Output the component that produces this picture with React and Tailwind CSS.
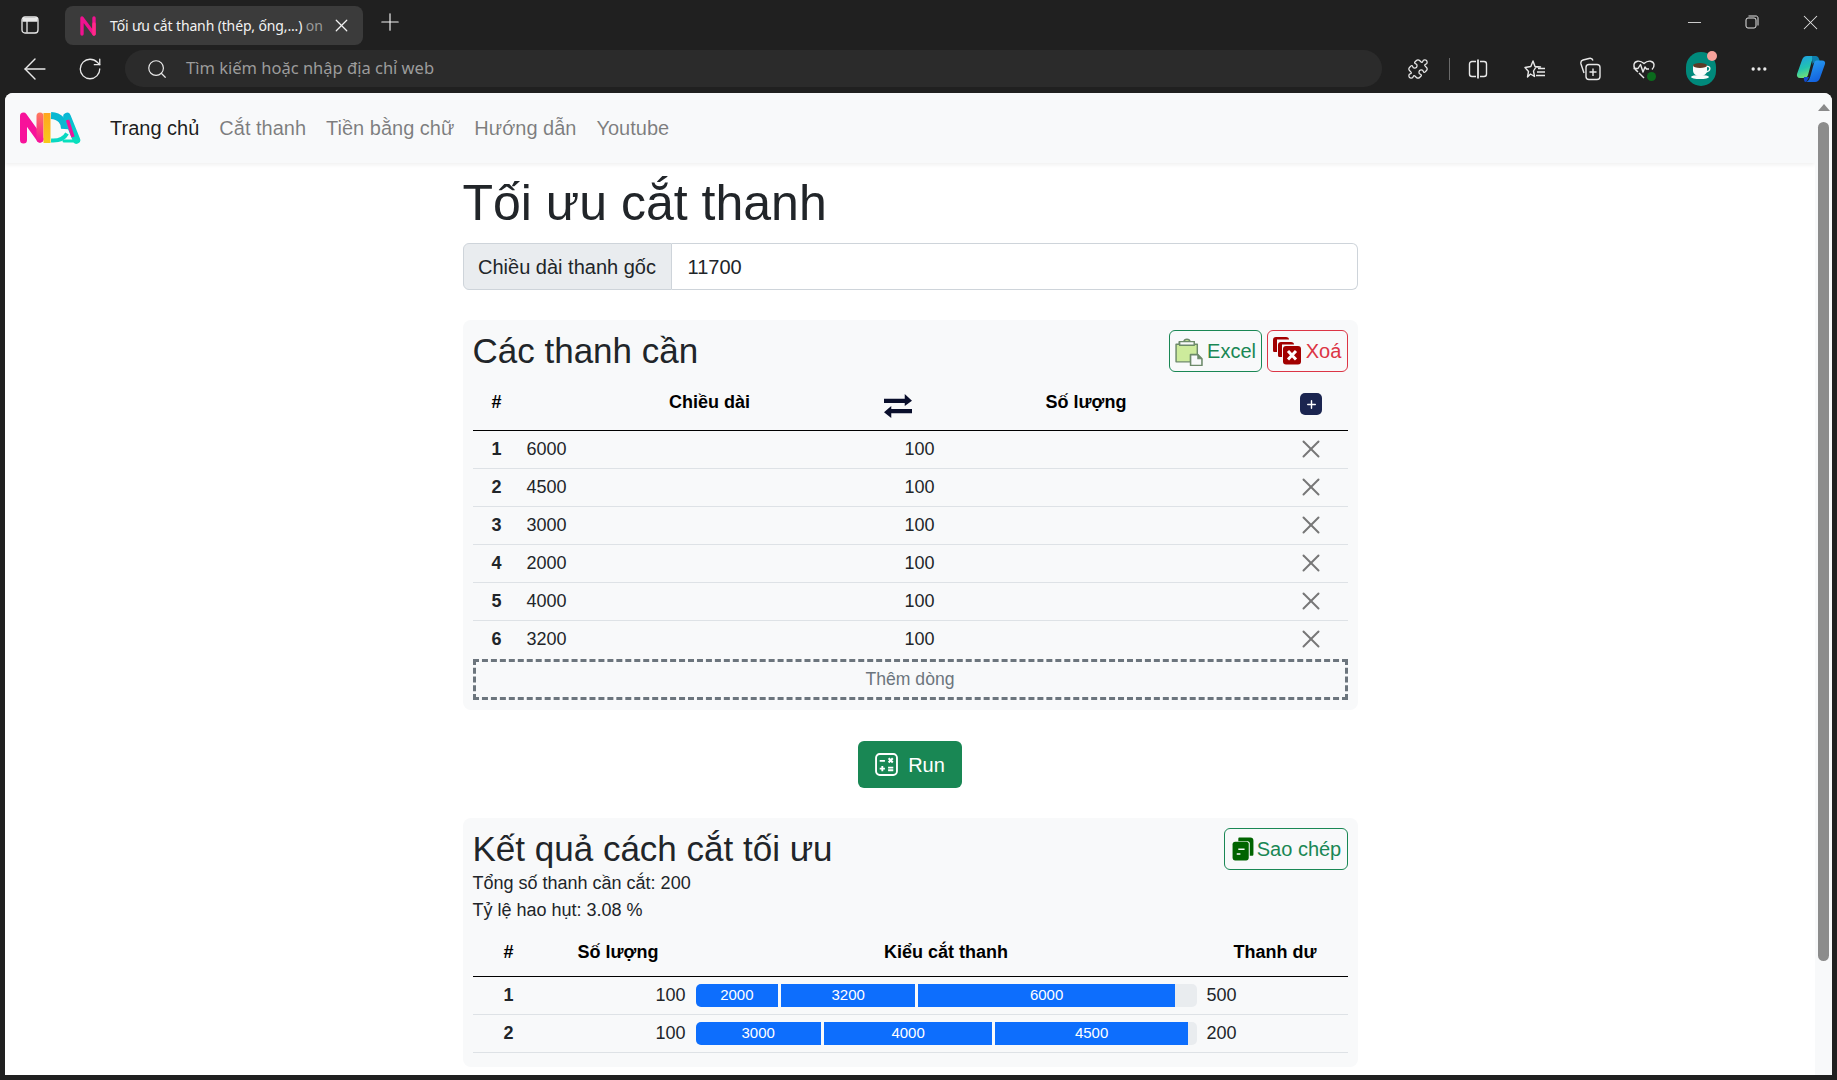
import { Plus, X, ArrowLeft, RotateCw, Search, Puzzle, Minus, Ellipsis } from "lucide-react";

const needed = [
  [1, 6000, 100],
  [2, 4500, 100],
  [3, 3000, 100],
  [4, 2000, 100],
  [5, 4000, 100],
  [6, 3200, 100],
];

const results = [
  { id: 1, qty: 100, cuts: [2000, 3200, 6000], left: 500 },
  { id: 2, qty: 100, cuts: [3000, 4000, 4500], left: 200 },
];

const STOCK = 11700;

const NdaLogo = () => (
  <svg viewBox="0 0 62 32" className="w-[62px] h-[32px]" fill="none" strokeLinecap="round" strokeLinejoin="round">
    <defs>
      <linearGradient id="nRight" gradientUnits="userSpaceOnUse" x1="0" y1="30" x2="0" y2="1">
        <stop offset="0" stopColor="#f5129a" />
        <stop offset="1" stopColor="#ff7a5c" />
      </linearGradient>
      <linearGradient id="dBar" gradientUnits="userSpaceOnUse" x1="0" y1="1" x2="0" y2="31">
        <stop offset="0" stopColor="#ffa51f" />
        <stop offset="1" stopColor="#f7c91b" />
      </linearGradient>
      <linearGradient id="aLeg" gradientUnits="userSpaceOnUse" x1="0" y1="1" x2="0" y2="31">
        <stop offset="0" stopColor="#09b5d6" />
        <stop offset="1" stopColor="#08e0bd" />
      </linearGradient>
    </defs>
    <path d="M3.500 28V4L20 27" stroke="#f7129a" strokeWidth="7" />
    <path d="M20 27V4" stroke="url(#nRight)" strokeWidth="7" />
    <path d="M31 3.500C40 4 45 10 44.500 17" stroke="#09b8d2" strokeWidth="7" strokeLinecap="butt" />
    <path d="M31 28.500C38 29 44 27 47 21.500" stroke="#08d8c2" strokeWidth="4" strokeLinecap="butt" />
    <path d="M27 1V31" stroke="url(#dBar)" strokeWidth="7" strokeLinecap="butt" />
    <path d="M47 4.500L56.500 28" stroke="url(#aLeg)" strokeWidth="7.500" />
    <path d="M47.500 8L53 25" stroke="#f0149c" strokeWidth="3.400" strokeLinecap="butt" />
    <path d="M44 29H57" stroke="#08e0bd" strokeWidth="3" />
  </svg>
);

const TabFavicon = () => (
  <svg viewBox="0 0 16 20" className="w-4 h-5" fill="none" strokeWidth="3.4" strokeLinecap="round">
    <path d="M2 18V2L14 18V2" stroke="#f0128f" strokeLinejoin="round" />
    <path d="M14 18V8" stroke="#ff2b88" />
  </svg>
);

const SidebarIcon = () => (
  <svg viewBox="0 0 18 18" className="w-[18px] h-[18px]" fill="none" stroke="#e8e8e8" strokeWidth="1.3">
    <rect x="1" y="1" width="16" height="16" rx="3" />
    <path d="M1.500 5H16.500M6 5V16.500" />
    <rect x="1.600" y="1.600" width="14.800" height="3.400" fill="#e8e8e8" stroke="none" />
  </svg>
);

const RestoreIcon = () => (
  <svg viewBox="0 0 14 14" className="w-[14px] h-[14px]" fill="none" stroke="#e4e4e4" strokeWidth="1">
    <rect x="1" y="3" width="10" height="10" rx="2" />
    <path d="M3.500 1H11C12.200 1 13 1.800 13 3V10.500" />
  </svg>
);

const SplitIcon = () => (
  <svg viewBox="0 0 20 20" className="w-5 h-5" fill="none" stroke="#e8e8e8" strokeWidth="1.4">
    <path d="M8 2.500H4A2.500 2.500 0 0 0 1.500 5V15A2.500 2.500 0 0 0 4 17.500H8" />
    <path d="M12 2.500H16A2.500 2.500 0 0 1 18.500 5V15A2.500 2.500 0 0 1 16 17.500H12" />
    <path d="M10 0.500V19.500" strokeWidth="1.8" />
  </svg>
);

const FavoritesIcon = () => (
  <svg viewBox="0 0 22 20" className="w-[22px] h-5" fill="none" stroke="#e8e8e8" strokeWidth="1.4" strokeLinejoin="round">
    <path d="M9 2L11 7.500L16.500 8H12L9.500 12L10.500 17.500L6.500 15L3.500 18L4.500 12.500L1 8.500L6.800 7.500Z" />
    <path d="M14 9.500H21M13 13H21M12 16.500H21" />
  </svg>
);

const CollectionsIcon = () => (
  <svg viewBox="0 0 22 24" className="w-[22px] h-6" fill="none" stroke="#e8e8e8" strokeWidth="1.4">
    <path d="M5 16L2 7C1.500 5 2.500 3.500 4 3L10 1.500C12 1 13.500 2 14 3.500" />
    <rect x="7" y="7.500" width="14" height="15" rx="3" />
    <path d="M14 11.500V19M10.500 15H17.500" />
  </svg>
);

const HeartIcon = () => (
  <div className="relative w-6 h-6">
    <svg viewBox="0 0 24 24" className="w-6 h-6" fill="none" stroke="#e8e8e8" strokeWidth="1.4" strokeLinejoin="round">
      <path d="M6 15C3 12.500 1.500 10.500 2 7.500C2.500 4 7.500 2.500 12 6.500C16.500 2.500 21.500 4 22 7.500C22.300 9.500 21.500 11 20 12.500" />
      <path d="M1.500 11.500H6L8.500 7.500L11 15L13 10L14.500 12H17" />
      <path d="M7 16L12 21" />
    </svg>
    <div className="absolute right-0 bottom-0 w-[9px] h-[9px] rounded-full bg-[#0b6b1d]" />
  </div>
);

const Avatar = () => (
  <div className="relative w-[30px] h-[34px] rounded-full bg-[#00897b] flex items-center justify-center">
    <svg viewBox="0 0 26 26" className="w-[26px] h-[26px]">
      <path d="M5 9H19V14C19 18 16 20 12 20C8 20 5 18 5 14Z" fill="#fafafa" />
      <ellipse cx="12" cy="9.500" rx="7" ry="2.500" fill="#5b3a26" />
      <path d="M19 10.500C23 10 23 15 18 16" stroke="#fafafa" strokeWidth="1.300" fill="none" />
      <ellipse cx="12" cy="21" rx="9" ry="2" fill="#fafafa" />
    </svg>
    <div className="absolute -top-[1px] -right-[1px] w-[10px] h-[10px] rounded-full bg-[#f7a29b]" />
  </div>
);

const CopilotIcon = () => (
  <svg viewBox="0 0 30 30" className="w-[30px] h-[30px]">
    <defs>
      <linearGradient id="copA" x1="0" y1="0" x2="0.3" y2="1">
        <stop offset="0" stopColor="#1f9be8" />
        <stop offset="0.6" stopColor="#22c3b0" />
        <stop offset="1" stopColor="#6fe07a" />
      </linearGradient>
      <linearGradient id="copB" x1="0" y1="0" x2="0.4" y2="1">
        <stop offset="0" stopColor="#2aa4f0" />
        <stop offset="1" stopColor="#1363e0" />
      </linearGradient>
    </defs>
    <path d="M11 2H20C17 3 16 6 15 10L12 21C11.500 23 10 24 8 24H4C1.500 24 0.500 22 1 20L6 6C7 3.500 8.500 2 11 2Z" fill="url(#copA)" />
    <path d="M16 2H20C22 2 23 4 24 8H20C18 8 17 9 16.500 11Z" fill="#0e7fae" />
    <path d="M19 28H10C13 27 14 24 15 20L18 9C18.500 7 20 6.500 22 6.500H26C28.500 6.500 29.500 8 29 10L24 24C23 26.500 21.500 28 19 28Z" fill="url(#copB)" />
    <path d="M8 23H13L12 25C11 27 10.500 28 9 28C8 27 7.500 25 8 23Z" fill="#1248c8" />
  </svg>
);

const ExcelIcon = () => (
  <svg viewBox="0 0 28 28" className="w-[29px] h-[29px]">
    <path d="M2 7H5V4.500H9.500C10 1.500 15 1.500 15.500 4.500H19.500V7H22.500V17H16V24H2Z" fill="#cdeb9c" stroke="#6d8a6a" strokeWidth="1.400" strokeLinejoin="round" />
    <path d="M5.500 4.500H19.500V8H5.500Z" fill="#f8f9fa" stroke="#6d8a6a" strokeWidth="1.300" />
    <path d="M16 17H23L27 21V27.500H16Z" fill="#f8f9fa" stroke="#6d8a6a" strokeWidth="1.500" strokeLinejoin="round" />
    <path d="M23 17V21H27" fill="#6d8a6a" stroke="#6d8a6a" strokeWidth="1" />
  </svg>
);

const DeleteIcon = () => (
  <svg viewBox="0 0 28 28" className="w-[28px] h-[28px]" fill="#a20000">
    <path d="M3 0H13C15 0 16 1 16 2.500H4V15H1C0.500 15 0 14.500 0 13V3C0 1 1 0 3 0Z" />
    <path d="M8 5H18C20 5 21 6 21 7.500H9V20H6.500C5.500 20 5 19.500 5 18V8C5 6 6 5 8 5Z" />
    <rect x="10" y="9" width="18" height="18.500" rx="3" />
    <path d="M15 14L23 22.500M23 14L15 22.500" stroke="#fff" strokeWidth="3" />
  </svg>
);

const CopyIcon = () => (
  <svg viewBox="0 0 21 23" className="w-[22px] h-[24px]">
    <path d="M6.500 0.500H17.500C19.500 0.500 20.500 1.500 20.500 3.500V16.500C20.500 17.500 20 18 19 18H17V6C17 5 16 4 15 4H6V1.500Z" fill="#006400" />
    <path d="M3 4.500H14C15 4.500 16 5.500 16 6.500V20C16 21.500 15 22.500 13.500 22.500H3C1.500 22.500 0.500 21.500 0.500 20V7C0.500 5.500 1.500 4.500 3 4.500Z" fill="#006400" />
    <path d="M6 11H12V12.500H6ZM4.500 15.500H8V17H4.500Z" fill="#f8f9fa" />
  </svg>
);

const CalcIcon = () => (
  <svg viewBox="0 0 22 22" className="w-[23px] h-[23px]" fill="none" stroke="#fff">
    <rect x="1" y="1" width="20" height="20" rx="3.500" strokeWidth="1.800" />
    <path d="M4.500 7.500H9.500M4.500 15H9.500M7 12.500V17.500M12.500 14H17.500M12.500 16.500H17.500" strokeWidth="1.800" />
    <path d="M13 5L17 9M17 5L13 9" strokeWidth="2" />
  </svg>
);

const SwapIcon = () => (
  <svg viewBox="0 0 27 23" className="w-[28px] h-[24px]" fill="#0a0f2c">
    <path d="M0 4.500H20V0L27 6.500L20 11.500V8.500H0Z" />
    <path d="M27 14.500H7V11.500L0 17.500L7 23V18.500H27Z" />
  </svg>
);

const TabsBar = () => (
  <div className="h-[50px] flex items-start shrink-0 text-[#f2f2f2]">
    <div className="w-[60px] mr-[5px] h-[49px] flex items-center justify-center">
      <SidebarIcon />
    </div>
    <div className="mt-[6px] w-[298px] h-[39px] bg-[#3b3b3b] rounded-lg flex items-center pl-[15px]">
      <TabFavicon />
      <span className="ml-[14px] w-[216px] whitespace-nowrap text-[14px] font-['Noto_Sans',sans-serif] tracking-[-0.14px]">
        Tối ưu cắt thanh (thép, ống,...) <span className="text-[#9a9a9a]">on</span>
      </span>
      <X size={21} strokeWidth={1.4} className="ml-[5px]" />
    </div>
    <div className="ml-[13px] mt-[8px]">
      <Plus size={28} strokeWidth={1} />
    </div>
    <div className="ml-auto flex items-center h-[44px]">
      <Minus size={21} strokeWidth={1} color="#e4e4e4" />
      <div className="ml-[40px]">
        <RestoreIcon />
      </div>
      <div className="ml-[39px] mr-[14px]">
        <X size={25} strokeWidth={1} color="#e4e4e4" />
      </div>
    </div>
  </div>
);

const ToolBar = () => (
  <div className="h-[43px] flex items-start shrink-0 text-[#e8e8e8]">
    <div className="ml-[8px] w-[54px] h-[37px] flex items-center justify-center">
      <ArrowLeft size={34} strokeWidth={1} />
    </div>
    <div className="w-[56px] h-[37px] flex items-center justify-center">
      <RotateCw size={26} strokeWidth={1.2} />
    </div>
    <div className="ml-[7px] w-[1257px] h-[37px] rounded-full bg-[#2b2b2b] flex items-center pl-[21px]">
      <Search size={22} strokeWidth={1.3} />
      <span className="ml-[18px] text-[16.500px] text-[#9c9c9c] font-['Noto_Sans',sans-serif]">
        Tìm kiếm hoặc nhập địa chỉ web
      </span>
    </div>
    <div className="flex items-center h-[37px]">
      <div className="ml-[24px] w-6 flex justify-center">
        <Puzzle size={22} strokeWidth={1.4} />
      </div>
      <div className="ml-[19px] w-[1px] h-[22px] bg-[#6a6a6a]" />
      <div className="ml-[16px] w-6 flex justify-center">
        <SplitIcon />
      </div>
      <div className="ml-[33px] w-6 flex justify-center">
        <FavoritesIcon />
      </div>
      <div className="ml-[31px] w-6 flex justify-center">
        <CollectionsIcon />
      </div>
      <div className="ml-[30px] w-6 flex justify-center">
        <HeartIcon />
      </div>
      <div className="ml-[30px]">
        <Avatar />
      </div>
      <div className="ml-[31px] w-6 flex justify-center">
        <Ellipsis size={20} strokeWidth={2} />
      </div>
      <div className="ml-[25px]">
        <CopilotIcon />
      </div>
    </div>
  </div>
);

const NavBar = () => (
  <nav className="h-[70px] shrink-0 bg-[#f8f9fa] shadow-[0_2px_4px_rgba(0,0,0,0.06)] flex items-center pl-[15px] text-[20px]">
    <NdaLogo />
    <div className="ml-[28px] flex gap-[20px] text-[#00000080]">
      <a className="text-[#000000e6]">Trang chủ</a>
      <a>Cắt thanh</a>
      <a>Tiền bằng chữ</a>
      <a>Hướng dẫn</a>
      <a>Youtube</a>
    </div>
  </nav>
);

const NeededCard = () => (
  <section className="mt-[30px] bg-[#f8f9fa] rounded-lg pt-[10px] px-[10px] pb-[10px]">
    <div className="flex items-center justify-between h-[42px]">
      <h3 className="text-[35px] text-[#212529] leading-none pb-[2px]">Các thanh cần</h3>
      <div className="flex gap-[5px]">
        <button className="h-[42px] w-[93px] border border-[#198754] rounded-[6px] text-[#198754] text-[20px] flex items-center justify-center gap-[4px]">
          <ExcelIcon />
          Excel
        </button>
        <button className="h-[42px] w-[81px] border border-[#dc3545] rounded-[6px] text-[#dc3545] text-[20px] flex items-center justify-center gap-[5px]">
          <DeleteIcon />
          Xoá
        </button>
      </div>
    </div>
    <table className="w-full table-fixed border-collapse text-[18px] mb-[1px]">
      <colgroup>
        <col className="w-[46px]" />
        <col className="w-[378px]" />
        <col className="w-[378px]" />
        <col className="w-[73px]" />
      </colgroup>
      <thead>
        <tr className="h-[58px] border-b border-black text-black">
          <th className="font-bold pt-[4px] pl-[2px]">#</th>
          <th className="font-bold pl-[4px] pt-[4px]">Chiều dài</th>
          <th className="font-bold relative pl-[1px] pt-[4px]">
            <div className="absolute left-[-13px] top-[22px]">
              <SwapIcon />
            </div>
            Số lượng
          </th>
          <th>
            <button className="mx-auto mt-[7px] w-[22px] h-[22px] rounded-[5px] bg-[#1b2550] flex items-center justify-center text-white">
              <Plus size={13} strokeWidth={2.6} />
            </button>
          </th>
        </tr>
      </thead>
      <tbody className="text-[#212529]">
        {needed.map(([id, length, qty], i) => (
          <tr key={id} className={`h-[38px] ${i < needed.length - 1 ? "border-b border-[#dee2e6]" : ""}`}>
            <td className="text-center font-bold pl-[2px]">{id}</td>
            <td className="px-[8px]">{length}</td>
            <td className="px-[8px]">{qty}</td>
            <td>
              <X size={30} strokeWidth={1.6} color="#777777" className="mx-auto" />
            </td>
          </tr>
        ))}
      </tbody>
    </table>
    <div className="h-[41px] border-[3px] border-dashed border-[#6c757d] flex items-center justify-center text-[#6c757d] text-[17.600px]">
      Thêm dòng
    </div>
  </section>
);

const ResultCard = () => (
  <section className="mt-[30px] bg-[#f8f9fa] rounded-lg pt-[10px] px-[10px] pb-[14px]">
    <div className="flex items-center justify-between h-[42px]">
      <h3 className="text-[35px] text-[#212529] leading-none pb-[2px]">Kết quả cách cắt tối ưu</h3>
      <button className="h-[42px] w-[124px] border border-[#198754] rounded-[6px] text-[#198754] text-[20px] flex items-center justify-center gap-[3px] pl-[2px]">
        <CopyIcon />
        Sao chép
      </button>
    </div>
    <p className="text-[18px] leading-[27px] text-[#212529]">Tổng số thanh cần cắt: 200</p>
    <p className="text-[18px] leading-[27px] text-[#212529]">Tỷ lệ hao hụt: 3.08 %</p>
    <table className="w-full table-fixed border-collapse text-[18px]">
      <colgroup>
        <col className="w-[72px]" />
        <col className="w-[149px]" />
        <col className="w-[505px]" />
        <col className="w-[149px]" />
      </colgroup>
      <thead>
        <tr className="h-[52px] border-b border-black text-black">
          <th className="font-bold pt-[5px]">#</th>
          <th className="font-bold pt-[5px] pr-[2px]">Số lượng</th>
          <th className="font-bold pt-[5px]">Kiểu cắt thanh</th>
          <th className="font-bold pt-[5px] pl-[4px]">Thanh dư</th>
        </tr>
      </thead>
      <tbody className="text-[#212529]">
        {results.map((row) => (
          <tr key={row.id} className="h-[38px] border-b border-[#dee2e6]">
            <td className="text-center font-bold">{row.id}</td>
            <td className="text-right pr-[8px]">{row.qty}</td>
            <td className="px-[2px]">
              <div className="flex h-[23px] rounded-[5px] overflow-hidden bg-[#e9ecef]">
                {row.cuts.map((cut, i) => (
                  <div
                    key={cut}
                    style={{ width: `${(cut / STOCK) * 100}%` }}
                    className={`bg-[#0d6efd] text-white text-[15px] flex items-center justify-center ${
                      i < row.cuts.length - 1 ? "border-r-[3px] border-[#f8f9fa]" : ""
                    }`}>
                    {cut}
                  </div>
                ))}
              </div>
            </td>
            <td className="pl-[8px]">{row.left}</td>
          </tr>
        ))}
      </tbody>
    </table>
  </section>
);

const ScrollBar = () => (
  <div className="w-[17px] shrink-0 bg-[#f8f9fa] flex flex-col items-center pt-[11px]">
    <div className="w-0 h-0 border-x-[6px] border-x-transparent border-b-[7px] border-b-[#8a8a8a]" />
    <div className="mt-[11px] w-[11px] h-[839px] rounded-full bg-[#8c8c8c]" />
  </div>
);

const App = () => {
  return (
    <div className="w-full h-screen overflow-hidden bg-[#202020] flex flex-col font-['Liberation_Sans',Arial,sans-serif]">
      <TabsBar />
      <ToolBar />
      <div className="flex-1 min-h-0 mx-[5px] mb-[5px] rounded-t-lg overflow-hidden bg-white flex">
        <div className="flex-1 min-w-0 flex flex-col">
          <NavBar />
          <main className="w-[895px] mx-auto">
            <h1 className="mt-[14px] mb-[13px] text-[50px] leading-[53px] text-[#212529]">Tối ưu cắt thanh</h1>
            <div className="flex h-[47px] text-[20px] text-[#212529]">
              <div className="w-[209px] shrink-0 bg-[#e9ecef] border border-[#ced4da] rounded-l-[6px] flex items-center justify-center">
                Chiều dài thanh gốc
              </div>
              <div className="flex-1 bg-white border border-l-0 border-[#ced4da] rounded-r-[6px] flex items-center pl-[16px]">
                11700
              </div>
            </div>
            <NeededCard />
            <div className="mt-[31px] flex justify-center">
              <button className="h-[47px] w-[104px] rounded-[6px] bg-[#198754] text-white text-[20px] flex items-center justify-center gap-[10px]">
                <CalcIcon />
                Run
              </button>
            </div>
            <ResultCard />
          </main>
        </div>
        <ScrollBar />
      </div>
    </div>
  );
};

export default App;
